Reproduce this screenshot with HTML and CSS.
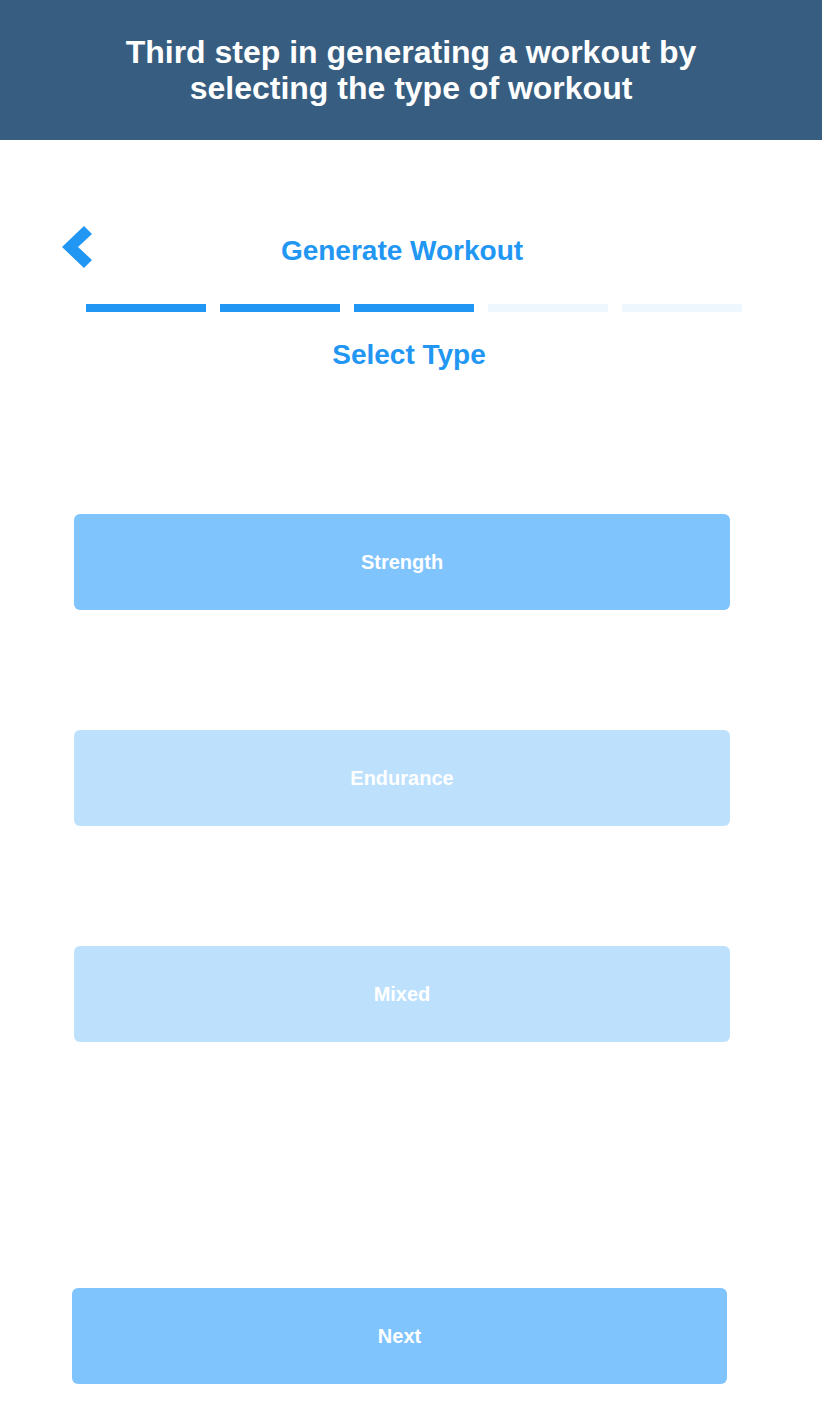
FILE: index.html
```html
<!DOCTYPE html>
<html lang="en">
<head>
<meta charset="utf-8">
<title>Generate Workout</title>
<link rel="stylesheet" href="styles.css">
</head>
<body>
<header class="banner">
  <h1 class="banner-title">Third step in generating a workout by<br>selecting the type of workout</h1>
</header>
<main class="screen">
  <nav class="topbar">
    <a class="back" href="#" aria-label="Back">
      <svg width="32" height="44" viewBox="0 0 32 44" aria-hidden="true">
        <polygon points="0,22 22,1 30,9 16,22 30,35 22,43" fill="#2196f3"/>
      </svg>
    </a>
    <h2 class="topbar-title">Generate Workout</h2>
  </nav>
  <div class="progress">
    <span class="seg seg-on"></span>
    <span class="seg seg-on"></span>
    <span class="seg seg-on"></span>
    <span class="seg"></span>
    <span class="seg"></span>
  </div>
  <h3 class="step-title">Select Type</h3>
  <div class="options">
    <button class="option option-selected">Strength</button>
    <button class="option">Endurance</button>
    <button class="option">Mixed</button>
  </div>
  <div class="footer">
    <button class="next">Next</button>
  </div>
</main>
</body>
</html>
```
FILE: styles.css
```css
* { box-sizing: border-box; }
html, body { margin: 0; padding: 0; background: #ffffff; }
body {
  font-family: "Liberation Sans", Arial, sans-serif;
  width: 822px;
  min-height: 1424px;
}
.banner {
  height: 140px;
  background: #375e80;
  display: flex;
  align-items: center;
  justify-content: center;
}
.banner-title {
  margin: 0;
  color: #ffffff;
  font-size: 32px;
  line-height: 36px;
  font-weight: 700;
  text-align: center;
}
.screen {
  display: flex;
  flex-direction: column;
}
.topbar {
  display: flex;
  align-items: flex-start;
  margin-top: 85px;
  padding-left: 62px;
  height: 43px;
}
.back {
  display: flex;
  width: 32px;
  height: 44px;
}
.topbar-title {
  flex: 1;
  margin: 5px 0 0 0;
  padding-right: 112px;
  text-align: center;
  color: #2196f3;
  font-size: 28px;
  font-weight: 700;
  line-height: 42px;
}
.progress {
  display: flex;
  gap: 14px;
  padding-left: 86px;
  margin-top: 36px;
}
.seg {
  width: 120px;
  height: 8px;
  background: #eef6fe;
}
.seg-on { background: #2196f3; }
.step-title {
  margin: 26px 0 0 0;
  text-align: center;
  color: #2196f3;
  font-size: 28px;
  font-weight: 700;
  line-height: 34px;
  padding-right: 4px;
}
.options {
  display: flex;
  flex-direction: column;
  gap: 120px;
  padding: 0 92px 0 74px;
  margin-top: 142px;
}
.option, .next {
  border: 0;
  height: 96px;
  border-radius: 6px;
  background: #bde0fd;
  color: #ffffff;
  font-family: "Liberation Sans", Arial, sans-serif;
  font-size: 20px;
  font-weight: 700;
  padding: 0;
}
.option-selected { background: #80c4fe; }
.footer {
  padding: 0 95px 0 72px;
  margin-top: 246px;
}
.next {
  width: 100%;
  background: #80c4fe;
}
```
